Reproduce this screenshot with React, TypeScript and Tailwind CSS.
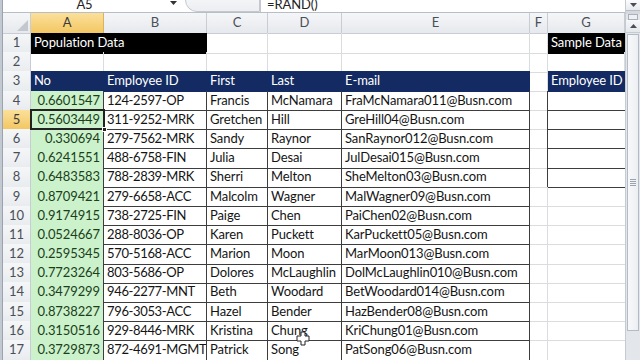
import React from "react";

const COLS = "grid grid-cols-[28px_73px_103px_61px_74px_188px_18px_77px]";
const ROWH = "h-[19.2px]";

type Row = [string, string, string, string, string];
const data: Row[] = [
  ["0.6601547", "124-2597-OP", "Francis", "McNamara", "FraMcNamara011@Busn.com"],
  ["0.5603449", "311-9252-MRK", "Gretchen", "Hill", "GreHill04@Busn.com"],
  ["0.330694", "279-7562-MRK", "Sandy", "Raynor", "SanRaynor012@Busn.com"],
  ["0.6241551", "488-6758-FIN", "Julia", "Desai", "JulDesai015@Busn.com"],
  ["0.6483583", "788-2839-MRK", "Sherri", "Melton", "SheMelton03@Busn.com"],
  ["0.8709421", "279-6658-ACC", "Malcolm", "Wagner", "MalWagner09@Busn.com"],
  ["0.9174915", "738-2725-FIN", "Paige", "Chen", "PaiChen02@Busn.com"],
  ["0.0524667", "288-8036-OP", "Karen", "Puckett", "KarPuckett05@Busn.com"],
  ["0.2595345", "570-5168-ACC", "Marion", "Moon", "MarMoon013@Busn.com"],
  ["0.7723264", "803-5686-OP", "Dolores", "McLaughlin", "DolMcLaughlin010@Busn.com"],
  ["0.3479299", "946-2277-MNT", "Beth", "Woodard", "BetWoodard014@Busn.com"],
  ["0.8738227", "796-3053-ACC", "Hazel", "Bender", "HazBender08@Busn.com"],
  ["0.3150516", "929-8446-MRK", "Kristina", "Chung", "KriChung01@Busn.com"],
  ["0.3729873", "872-4691-MGMT", "Patrick", "Song", "PatSong06@Busn.com"],
];

const GRID = "border-r border-b border-[#dadcdd]";
const DARK = "border-r border-b border-[#3d3d3d]";
const NAVY = "bg-[#132b62] text-white border-r border-b border-[#132b62]";
const CELL = "flex items-center overflow-hidden whitespace-nowrap px-[3px]";

function RowHead({ n, active }: { n: number; active?: boolean }) {
  return (
    <div
      className={
        active
          ? "flex items-center justify-center border-r border-b border-[#d9b45c] bg-linear-to-b from-[#fbe09a] to-[#f3c762] text-[#3b3b3b]"
          : "flex items-center justify-center border-r border-b border-[#c9cdd3] bg-linear-to-b from-[#f5f6f8] to-[#e9ecef] text-[#4a4f57]"
      }
    >
      {n}
    </div>
  );
}

export default function App() {
  return (
    <div className="w-[640px] h-[360px] overflow-hidden bg-white flex font-[Lato,sans-serif] text-[13px] tracking-[-0.1px] text-[#141414] relative">
      {/* left window frame */}
      <div className="w-[3px] bg-[#c3c9d1] border-r border-[#9aa3ae]" />

      {/* main */}
      <div className="w-[622px] flex flex-col">
        {/* formula bar */}
        <div className="h-[13px] flex border-b border-[#b9bec6] overflow-hidden">
          <div className="w-[163px] flex justify-center overflow-hidden">
            <span className="leading-[12px] -mt-[2px] text-[#222]">A5</span>
          </div>
          <div className="w-[14px] flex items-start justify-center pt-[1px]">
            <svg width="7" height="4" viewBox="0 0 7 4">
              <path d="M0 0 L7 0 L3.5 4 Z" fill="#333" />
            </svg>
          </div>
          <div className="w-[5px]" />
          <div className="w-[75px] h-[24px] -mt-[12px] rounded-l-full border border-[#c4c8ce] bg-linear-to-b from-[#fafbfc] to-[#eceef1] flex items-end justify-end pr-[4px] pb-[12px]">
            <span className="font-['Liberation_Serif',serif] italic text-[12px] leading-[12px] text-[#333]">fx</span>
          </div>
          <div className="flex-1 border-l border-[#c4c8ce] pl-[6px] overflow-hidden">
            <span className="leading-[12px] -mt-[2px] block text-[#222]">=RAND()</span>
          </div>
        </div>

        {/* column headers */}
        <div className={`${COLS} h-[20px] text-[#4a4f57]`}>
          <div className="relative border-r border-b border-[#c9cdd3] bg-linear-to-b from-[#f5f6f8] to-[#e6e9ed]">
            <svg className="absolute right-[2px] bottom-[2px]" width="11" height="11" viewBox="0 0 11 11">
              <path d="M11 0 L11 11 L0 11 Z" fill="#c3c8cf" />
            </svg>
          </div>
          <div className="flex items-center justify-center border-r border-b border-[#d9b45c] bg-linear-to-b from-[#fbe09a] to-[#f3c762] text-[#3b3b3b]">A</div>
          {["B", "C", "D", "E", "F", "G"].map((c) => (
            <div key={c} className="flex items-center justify-center border-r border-b border-[#c9cdd3] bg-linear-to-b from-[#f5f6f8] to-[#e6e9ed]">
              {c}
            </div>
          ))}
        </div>

        {/* row 1 */}
        <div className={`${COLS} ${ROWH}`}>
          <RowHead n={1} />
          <div className={`${CELL} col-span-2 bg-black text-white border-b border-r border-black`}>Population Data</div>
          <div className={GRID} />
          <div className={GRID} />
          <div className={GRID} />
          <div className={GRID} />
          <div className={`${CELL} bg-black text-white border-b border-black`}>Sample Data</div>
        </div>

        {/* row 2 */}
        <div className={`${COLS} ${ROWH}`}>
          <RowHead n={2} />
          <div className={GRID} />
          <div className={GRID} />
          <div className={GRID} />
          <div className={GRID} />
          <div className={GRID} />
          <div className={GRID} />
          <div className={GRID} />
        </div>

        {/* row 3 */}
        <div className={`${COLS} ${ROWH}`}>
          <RowHead n={3} />
          <div className={`${CELL} ${NAVY}`}>No</div>
          <div className={`${CELL} ${NAVY}`}>Employee ID</div>
          <div className={`${CELL} ${NAVY}`}>First</div>
          <div className={`${CELL} ${NAVY}`}>Last</div>
          <div className={`${CELL} ${NAVY}`}>E-mail</div>
          <div className={GRID} />
          <div className={`${CELL} bg-[#132b62] text-white border-b border-[#132b62]`}>Employee ID</div>
        </div>

        {data.map((r, i) => {
          const n = i + 4;
          const gBox = n <= 8;
          const active = n === 5;
          return (
            <div key={n} className={`${COLS} ${ROWH}`}>
              <RowHead n={n} active={active} />
              <div className="relative flex items-center justify-end overflow-hidden whitespace-nowrap px-[3px] bg-[#cbf2cb] text-[#1b3f1b] border-r border-b border-r-[#3d3d3d] border-b-[#e4f6e4]">
                {r[0]}
              </div>
              <div className={`flex items-center overflow-hidden whitespace-nowrap pl-[3px] tracking-[-0.35px] ${DARK}`}>{r[1]}</div>
              <div className={`${CELL} ${DARK}`}>{r[2]}</div>
              <div className={`${CELL} ${DARK}`}>{r[3]}</div>
              <div className={`${CELL} ${DARK}`}>{r[4]}</div>
              <div className={gBox ? "border-r border-b border-r-[#3d3d3d] border-b-[#dadcdd]" : GRID} />
              <div className={gBox ? "border-b border-[#3d3d3d]" : "border-b border-[#dadcdd]"} />
            </div>
          );
        })}
      </div>

      {/* scrollbar */}
      <div className="w-[15px] flex flex-col bg-[#e3e7ec] border-l border-[#c5cbd3]">
        <div className="h-[11px] flex items-center justify-center bg-linear-to-b from-[#fbfcfd] to-[#e7eaee] border-b border-[#b9bec6]">
          <svg width="7" height="4" viewBox="0 0 7 4">
            <path d="M0 0 L7 0 L3.5 4 Z" fill="#4a4f57" />
          </svg>
        </div>
        <div className="h-[3px] bg-[#d5d9df]" />
        <div className="h-[6px] mx-[2px] border border-[#aab1bb] bg-[#eef0f3]" />
        <div className="h-[13px] flex items-center justify-center bg-linear-to-b from-[#f6f7f9] to-[#e4e7eb] border-b border-[#c5cbd3]">
          <svg width="7" height="4" viewBox="0 0 7 4">
            <path d="M0 4 L7 4 L3.5 0 Z" fill="#4a4f57" />
          </svg>
        </div>
        <div className="h-[297px] mx-[1px] mt-[1px] border border-[#b4bbc5] bg-linear-to-r from-[#f7f8fa] to-[#eceff2] flex items-center justify-center">
          <div className="flex flex-col gap-[1px]">
            <div className="w-[6px] h-[1px] bg-[#9aa3ae]" />
            <div className="w-[6px] h-[1px] bg-[#9aa3ae]" />
            <div className="w-[6px] h-[1px] bg-[#9aa3ae]" />
            <div className="w-[6px] h-[1px] bg-[#9aa3ae]" />
          </div>
        </div>
      </div>

      {/* selection A5 */}
      <div className="absolute left-[30px] top-[109px] w-[75px] h-[21px] border-2 border-[#222]" />
      <div className="absolute left-[102px] top-[127px] w-[5px] h-[5px] bg-[#222] border border-white" />

      {/* cursor */}
      <svg className="absolute left-[296px] top-[331px]" width="14" height="15" viewBox="0 0 14 15">
        <path d="M5 1 H9 V5 H13 V10 H9 V14 H5 V10 H1 V5 H5 Z" fill="white" stroke="#222" strokeWidth="1" />
      </svg>
    </div>
  );
}
